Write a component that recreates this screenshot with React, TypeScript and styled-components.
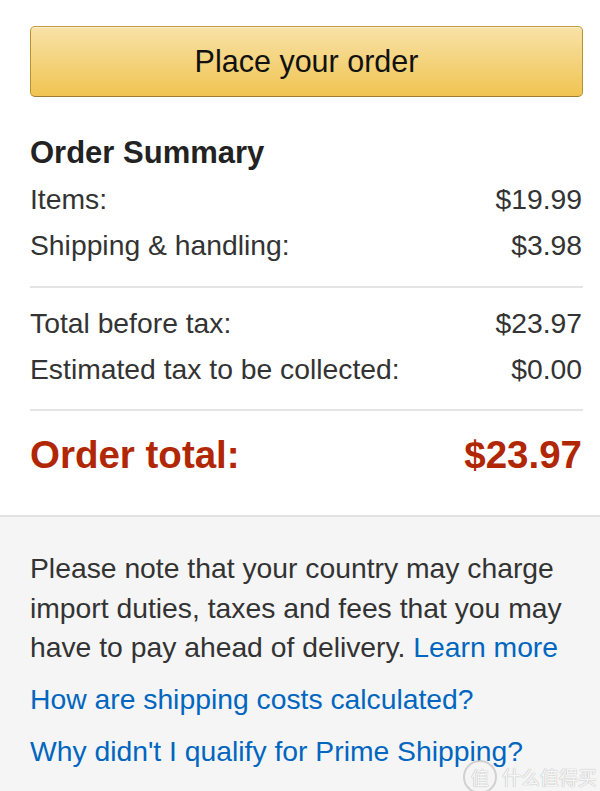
import React from "react";
import styled, { createGlobalStyle } from "styled-components";

const GlobalStyle = createGlobalStyle`
  html, body {
    margin: 0;
    padding: 0;
    background: #fff;
  }
  body {
    font-family: "Liberation Sans", Arial, sans-serif;
    color: #333;
  }
`;

const Page = styled.div`
  position: relative;
  display: flex;
  flex-direction: column;
  min-height: 100vh;
`;

const Summary = styled.section`
  padding: 26px 17px 35px 30px;
  background: #fff;
`;

const PlaceOrderButton = styled.button`
  display: block;
  width: 100%;
  height: 71px;
  border: 1px solid;
  border-color: #c29d3e #b8922f #9c7e31;
  border-radius: 5px;
  background: linear-gradient(to bottom, #f8e2a8, #f0c451);
  box-shadow: inset 0 1px 0 rgba(255, 255, 255, 0.45);
  font-family: inherit;
  font-size: 30.5px;
  color: #111;
  cursor: pointer;
`;

const Heading = styled.h2`
  margin: 33px 0 0;
  font-size: 31px;
  line-height: 46px;
  font-weight: 700;
  color: #222;
`;

const Row = styled.div<{ $total?: boolean }>`
  display: flex;
  justify-content: space-between;
  align-items: center;
  height: ${({ $total }) => ($total ? "50px" : "46px")};
  font-size: ${({ $total }) => ($total ? "38.5px" : "28.3px")};
  font-weight: ${({ $total }) => ($total ? 700 : 400)};
  color: ${({ $total }) => ($total ? "#b12704" : "#333")};
  padding-right: 1px;
`;

const Divider = styled.hr<{ $top: number; $bottom: number }>`
  margin: ${({ $top, $bottom }) => `${$top}px 0 ${$bottom}px`};
  border: 0;
  height: 2px;
  background: #e4e4e4;
`;

const Notes = styled.section`
  flex: 1;
  padding: 32px 30px 30px 30px;
  background: #f5f5f5;
  border-top: 2px solid #e1e1e1;
  font-size: 28.3px;
  line-height: 39.5px;
  color: #333;
`;

const Notice = styled.p`
  margin: 0;
  max-width: 550px;
`;

const Link = styled.a<{ $block?: boolean }>`
  color: #0066c0;
  text-decoration: none;
  display: ${({ $block }) => ($block ? "block" : "inline")};
  margin-top: ${({ $block }) => ($block ? "12.5px" : "0")};
`;

// faint site stamp in the lower right corner
const Watermark = styled.div`
  position: absolute;
  right: 3px;
  bottom: 8px;
  display: flex;
  align-items: center;
  gap: 5px;
  white-space: nowrap;
  font-family: "Noto Sans CJK SC", sans-serif;
  color: rgba(255, 255, 255, 0.9);
  text-shadow: 0 0 1px #b8b8b8, 0 0 1px #b8b8b8;
  font-size: 19px;
  pointer-events: none;
`;

const WatermarkBadge = styled.span`
  display: inline-flex;
  align-items: center;
  justify-content: center;
  width: 30px;
  height: 30px;
  border-radius: 50%;
  border: 2px solid rgba(200, 200, 200, 0.8);
  font-size: 18px;
`;

const lines: { label: string; value: string }[][] = [
  [
    { label: "Items:", value: "$19.99" },
    { label: "Shipping & handling:", value: "$3.98" },
  ],
  [
    { label: "Total before tax:", value: "$23.97" },
    { label: "Estimated tax to be collected:", value: "$0.00" },
  ],
];

export default function App() {
  return (
    <>
      <GlobalStyle />
      <Page>
        <Summary>
          <PlaceOrderButton>Place your order</PlaceOrderButton>
          <Heading>Order Summary</Heading>
          {lines[0].map((l) => (
            <Row key={l.label}>
              <span>{l.label}</span>
              <span>{l.value}</span>
            </Row>
          ))}
          <Divider $top={18} $bottom={12} />
          {lines[1].map((l) => (
            <Row key={l.label}>
              <span>{l.label}</span>
              <span>{l.value}</span>
            </Row>
          ))}
          <Divider $top={17} $bottom={19} />
          <Row $total>
            <span>Order total:</span>
            <span>$23.97</span>
          </Row>
        </Summary>
        <Notes>
          <Notice>
            Please note that your country may charge import duties, taxes and
            fees that you may have to pay ahead of delivery.{" "}
            <Link href="#">Learn more</Link>
          </Notice>
          <Link $block href="#">
            How are shipping costs calculated?
          </Link>
          <Link $block href="#">
            Why didn't I qualify for Prime Shipping?
          </Link>
        </Notes>
        <Watermark>
          <WatermarkBadge>值</WatermarkBadge>
          <span>什么值得买</span>
        </Watermark>
      </Page>
    </>
  );
}
